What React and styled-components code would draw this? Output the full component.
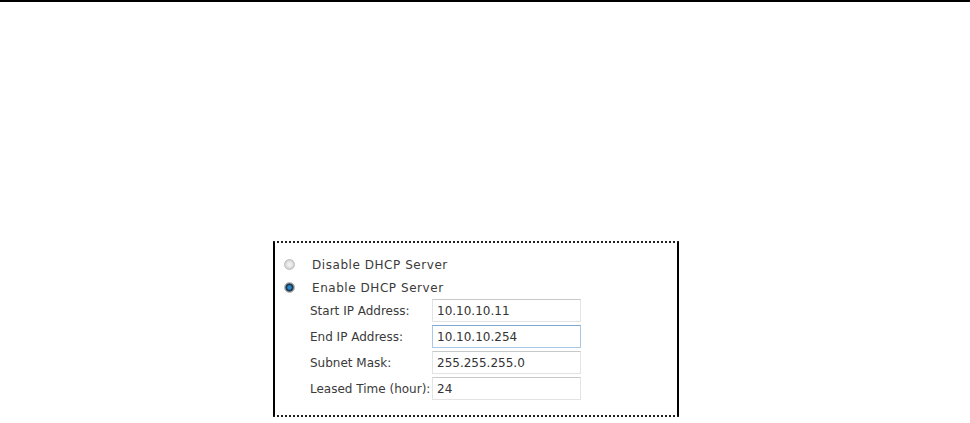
import React, { useState } from "react";
import styled, { createGlobalStyle } from "styled-components";

const GlobalStyle = createGlobalStyle`
  body {
    margin: 0;
    background: #fff;
    font-family: "DejaVu Sans", Verdana, sans-serif;
  }
`;

const TopRule = styled.div`
  height: 2px;
  background: #000;
`;

const Panel = styled.div`
  margin: 239px 0 0 273px;
  width: 393px;
  padding: 10px 0 15px 9px;
  border-left: 2px solid #000;
  border-right: 2px solid #000;
  border-top: 2px dotted #222;
  border-bottom: 2px dotted #222;
  box-sizing: content-box;
  display: flex;
  flex-direction: column;
`;

const RadioRow = styled.label`
  display: flex;
  align-items: center;
  height: 23px;
  gap: 17px;
  font-size: 12px;
  letter-spacing: 0.55px;
  color: #3a3a3a;
  cursor: pointer;
`;

const RadioDot = styled.span`
  width: 11px;
  height: 11px;
  border-radius: 50%;
  box-sizing: border-box;
  border: 1px solid ${(p) => (p.$on ? "#a8b0b6" : "#bdbdbd")};
  background: ${(p) =>
    p.$on
      ? "radial-gradient(circle, #2a86c8 0 1.8px, #0f3350 2.8px, #33414d 3.6px, #8c979f 4.5px)"
      : "radial-gradient(circle, #efefef 0 1.5px, #d2d2d2 4.5px)"};
`;

const Fields = styled.div`
  display: grid;
  grid-template-columns: 122px 149px;
  row-gap: 3px;
  padding-left: 26px;
`;

const FieldLabel = styled.span`
  font-size: 12px;
  color: #3a3a3a;
  display: flex;
  align-items: center;
  height: 23px;
  white-space: nowrap;
`;

const TextInput = styled.input`
  height: 23px;
  width: 149px;
  box-sizing: border-box;
  padding: 0 4px;
  font-family: inherit;
  font-size: 12px;
  color: #333;
  outline: none;
  border: 1px solid ${(p) => (p.$focus ? "#a9c7e6" : "#e2e3e5")};
  border-top-color: ${(p) => (p.$focus ? "#7ea7d2" : "#c8c9cb")};
  background: #fff;
`;

const fields = [
  { label: "Start IP Address:", value: "10.10.10.11" },
  { label: "End IP Address:", value: "10.10.10.254", focus: true },
  { label: "Subnet Mask:", value: "255.255.255.0" },
  { label: "Leased Time (hour):", value: "24" },
];

export default function App() {
  const [mode, setMode] = useState("enable");
  return (
    <>
      <GlobalStyle />
      <TopRule />
      <Panel>
        <RadioRow onClick={() => setMode("disable")}>
          <RadioDot $on={mode === "disable"} />
          Disable DHCP Server
        </RadioRow>
        <RadioRow onClick={() => setMode("enable")}>
          <RadioDot $on={mode === "enable"} />
          Enable DHCP Server
        </RadioRow>
        <Fields>
          {fields.map((f) => (
            <React.Fragment key={f.label}>
              <FieldLabel>{f.label}</FieldLabel>
              <TextInput defaultValue={f.value} $focus={f.focus} />
            </React.Fragment>
          ))}
        </Fields>
      </Panel>
    </>
  );
}
